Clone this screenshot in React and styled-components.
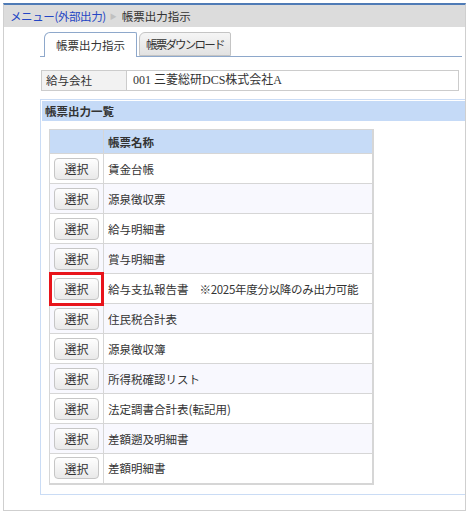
import React from "react";
import styled, { createGlobalStyle } from "styled-components";

const GlobalStyle = createGlobalStyle`
  html, body {
    margin: 0;
    padding: 0;
    background: #ffffff;
  }
  body {
    font-family: "Noto Sans CJK JP", "Liberation Sans", sans-serif;
    font-size: 11.5px;
    color: #333333;
  }
`;

const Frame = styled.div`
  margin: 3px 0 0 3px;
  width: 461px;
  border: 1px solid #cfcfcf;
  border-top: 2px solid #4f7bb6;
  padding-bottom: 15px;
`;

const Breadcrumb = styled.div`
  display: flex;
  align-items: center;
  height: 22px;
  padding-left: 6px;
  background: #dcdcdc;
  line-height: 22px;
`;

const CrumbLink = styled.a`
  color: #2446c4;
  text-decoration: none;
  letter-spacing: -0.4px;
`;

const CrumbArrow = styled.span`
  margin: 0 5px 0 4px;
  color: #c0c0c0;
  font-size: 7px;
`;

const Content = styled.div`
  padding-left: 36px;
`;

const Tabs = styled.div`
  display: flex;
  align-items: flex-end;
  gap: 2px;
  margin: 5px 3px 0 0;
  padding-left: 4px;
  border-bottom: 1px solid #8ea8cb;
`;

const Tab = styled.div`
  height: ${(p) => (p.$active ? 24 : 22)}px;
  line-height: ${(p) => (p.$active ? 24 : 22)}px;
  padding: 0 ${(p) => (p.$active ? 11 : 6)}px;
  margin-bottom: ${(p) => (p.$active ? -1 : 0)}px;
  border: 1px solid ${(p) => (p.$active ? "#8ea8cb" : "#c4c4c4")};
  border-bottom: ${(p) => (p.$active ? "none" : "1px solid #c4c4c4")};
  border-radius: 6px 2px 0 0;
  background: ${(p) =>
    p.$active ? "#ffffff" : "linear-gradient(#f5f5f5, #e2e2e2)"};
  letter-spacing: ${(p) => p.$tight || 0}px;
  color: #333;
  white-space: nowrap;
`;

const InfoTable = styled.table`
  margin: 13px 0 0 1px;
  width: 418px;
  border-collapse: collapse;
  td {
    height: 19px;
    border: 1px solid #cccccc;
    padding: 0 4px;
    line-height: 19px;
  }
`;

const LabelCell = styled.td`
  width: 76px;
  background: #f2f2f2;
`;

const ValueCell = styled.td`
  font-family: "Liberation Serif", "Noto Sans CJK JP", serif;
  font-size: 12px;
  padding-left: 6px !important;
`;

const Section = styled.div`
  margin: 8px 0 0 0;
  padding: 1px 0 9px 0;
  border: 1px solid #cadcf5;
  border-right: none;
`;

const SectionHeader = styled.div`
  height: 20px;
  line-height: 20px;
  padding-left: 3px;
  margin: 0 0 0 1px;
  background: #c5daf7;
  font-weight: bold;
`;

const ListTable = styled.table`
  margin: 8px 0 0 8px;
  width: 325px;
  border-collapse: collapse;
  border: 1px solid #d0d0d0;
  border-right: 2px solid #d6d6d6;
  border-bottom: 2px solid #d6d6d6;
  th, td {
    border: 1px solid #d6d6d6;
    padding: 0 4px;
    text-align: left;
    white-space: nowrap;
  }
  th {
    height: 23px;
    background: #c6dbf7;
    font-weight: bold;
  }
`;

const Row = styled.tr`
  height: 30px;
  background: ${(p) => (p.$alt ? "#f8f8fe" : "#ffffff")};
`;

const SelectCell = styled.td`
  width: 45px;
`;

const ButtonWrap = styled.span`
  position: relative;
  display: inline-block;
  vertical-align: middle;
`;

const SelectButton = styled.button`
  display: block;
  width: 45px;
  height: 22px;
  padding: 0;
  border: 1px solid #c6c6c6;
  border-radius: 4px;
  background: linear-gradient(#fefefe, #e9e9e9);
  font-family: inherit;
  font-size: 12px;
  color: #333;
  cursor: pointer;
`;

const Highlight = styled.span`
  position: absolute;
  top: -6px;
  bottom: -6px;
  left: -5px;
  right: -5px;
  border: 3px solid #e8141b;
  pointer-events: none;
`;

const Note = styled.span`
  margin-left: 11px;
  letter-spacing: -0.3px;
`;

const reports = [
  { name: "賃金台帳" },
  { name: "源泉徴収票" },
  { name: "給与明細書" },
  { name: "賞与明細書" },
  { name: "給与支払報告書", note: "※2025年度分以降のみ出力可能", marked: true },
  { name: "住民税合計表" },
  { name: "源泉徴収簿" },
  { name: "所得税確認リスト" },
  { name: "法定調書合計表(転記用)" },
  { name: "差額遡及明細書" },
  { name: "差額明細書" },
];

export default function App() {
  return (
    <>
      <GlobalStyle />
      <Frame>
        <Breadcrumb>
          <CrumbLink href="#">メニュー(外部出力)</CrumbLink>
          <CrumbArrow>▶</CrumbArrow>
          <span>帳票出力指示</span>
        </Breadcrumb>
        <Content>
          <Tabs>
            <Tab $active>帳票出力指示</Tab>
            <Tab $tight={-1.8}>帳票ダウンロード</Tab>
          </Tabs>
          <InfoTable>
            <tbody>
              <tr>
                <LabelCell>給与会社</LabelCell>
                <ValueCell>001 三菱総研DCS株式会社A</ValueCell>
              </tr>
            </tbody>
          </InfoTable>
          <Section>
            <SectionHeader>帳票出力一覧</SectionHeader>
            <ListTable>
              <thead>
                <tr>
                  <th></th>
                  <th>帳票名称</th>
                </tr>
              </thead>
              <tbody>
                {reports.map((r, i) => (
                  <Row key={r.name} $alt={i % 2 === 1}>
                    <SelectCell>
                      <ButtonWrap>
                        <SelectButton>選択</SelectButton>
                        {r.marked && <Highlight />}
                      </ButtonWrap>
                    </SelectCell>
                    <td>
                      {r.name}
                      {r.note && <Note>{r.note}</Note>}
                    </td>
                  </Row>
                ))}
              </tbody>
            </ListTable>
          </Section>
        </Content>
      </Frame>
    </>
  );
}
